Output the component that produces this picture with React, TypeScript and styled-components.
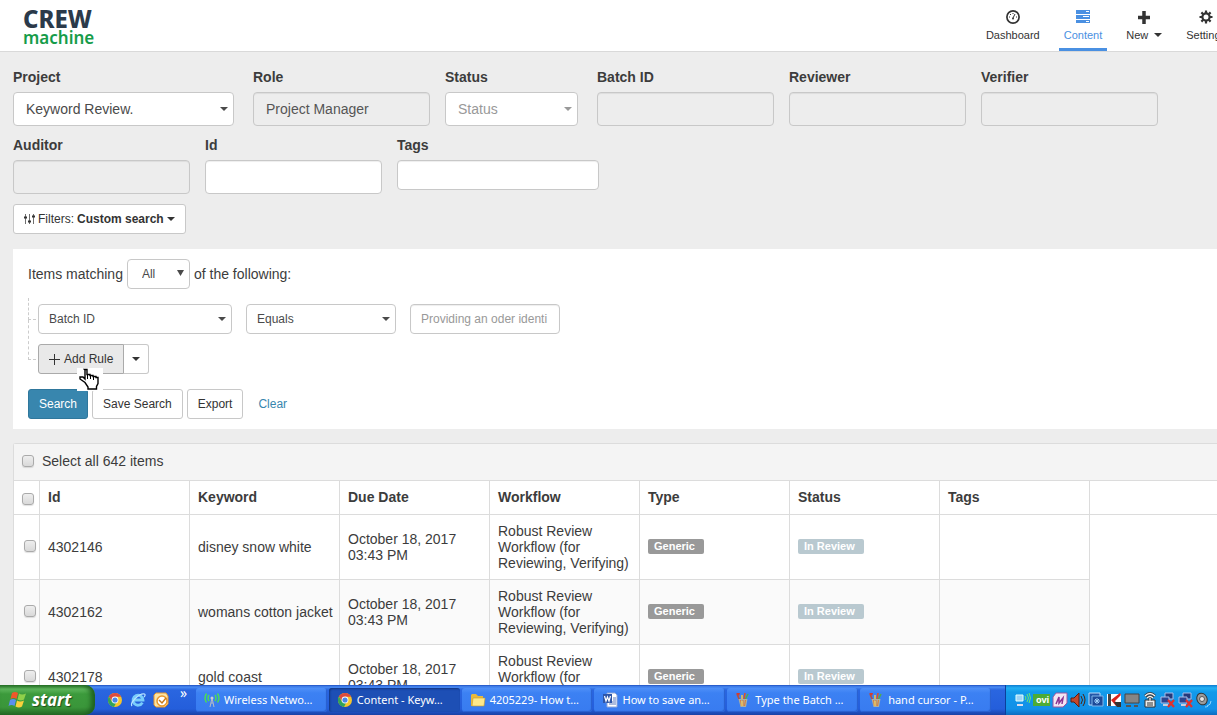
import React from "react";
import styled, { createGlobalStyle, css } from "styled-components";

const Global = createGlobalStyle`
  *, *::before, *::after { box-sizing: border-box; }
  body { margin: 0; background: #ededed; color: #3c3c3c; font: 14px/16px "Liberation Sans", Arial, sans-serif; }
  button, input, select { font: inherit; color: inherit; margin: 0; }
`;

const Desktop = styled.div`
  display: flex;
  flex-direction: column;
  height: 100vh;
  overflow: hidden;
`;
const Page = styled.div`
  flex: 1;
  min-height: 0;
  overflow: hidden;
`;

/* Header */
const Header = styled.header`
  display: flex;
  justify-content: space-between;
  height: 52px;
  background: #fff;
  border-bottom: 1px solid #d9d9d9;
  overflow: hidden;
`;
const Logo = styled.a`
  display: flex;
  flex-direction: column;
  padding: 8px 0 0 23px;
  text-decoration: none;
  font-family: "Noto Sans", sans-serif;
`;
const LogoTop = styled.span`
  color: #2b3a4a;
  font-size: 24px;
  line-height: 22px;
  font-weight: 800;
`;
const LogoBottom = styled.span`
  color: #169c4a;
  font-size: 17px;
  line-height: 16px;
  font-weight: 600;
`;
const Nav = styled.nav`
  display: flex;
  gap: 14px;
  margin-right: -14px;
`;
const NavItem = styled.a<{ $active?: boolean }>`
  display: flex;
  flex-direction: column;
  align-items: center;
  gap: 2px;
  padding: 9px 5px 0;
  border-bottom: 3px solid ${(p) => (p.$active ? "#4a90e2" : "transparent")};
  color: ${(p) => (p.$active ? "#4a90e2" : "#333")};
  font-size: 11px;
  text-decoration: none;
  white-space: nowrap;
`;
const NavText = styled.span`
  display: flex;
  align-items: center;
  gap: 6px;
`;

/* Search fields */
const Fields = styled.form`
  display: flex;
  flex-wrap: wrap;
  align-items: flex-start;
  row-gap: 11px;
  padding: 17px 0 10px 13px;
`;
const Field = styled.div<{ $w: number; $gap?: number }>`
  width: ${(p) => p.$w}px;
  margin-right: ${(p) => p.$gap ?? 15}px;
`;
const Label = styled.label`
  display: block;
  margin-bottom: 7px;
  font-weight: 700;
`;
const box = css`
  background: #fff;
  border: 1px solid #c8c8c8;
  border-radius: 4px;
`;
const TextBox = styled.input<{ $h?: number; $small?: boolean }>`
  ${box}
  display: block;
  width: 100%;
  height: ${(p) => p.$h ?? 34}px;
  padding: 0 ${(p) => (p.$small ? 10 : 12)}px;
  font-size: ${(p) => (p.$small ? 12 : 14)}px;
  box-shadow: inset 0 1px 1px rgba(0, 0, 0, 0.07);
  &:disabled { background: #ededed; color: #555; opacity: 1; }
  &::placeholder { color: #999; opacity: 1; }
`;
const SelectWrap = styled.div<{ $w?: number; $muted?: boolean }>`
  position: relative;
  flex: none;
  width: ${(p) => (p.$w ? `${p.$w}px` : "100%")};
  color: ${(p) => (p.$muted ? "#999" : "#4a4a4a")};
  > svg { position: absolute; right: 6px; top: 50%; margin-top: -2px; pointer-events: none; }
`;
const Select = styled.select<{ $small?: boolean }>`
  ${box}
  display: block;
  appearance: none;
  width: 100%;
  height: ${(p) => (p.$small ? 30 : 34)}px;
  padding: 0 ${(p) => (p.$small ? 10 : 12)}px;
  font-size: ${(p) => (p.$small ? 12 : 14)}px;
`;
const AllSelect = styled(SelectWrap)`
  select { padding-left: 14px; }
  > svg { margin-top: -4px; }
`;

const Button = styled.button<{ $tone?: "primary" | "link" | "pressed" }>`
  display: inline-flex;
  align-items: center;
  justify-content: center;
  gap: 3px;
  height: 30px;
  padding: 0 10px;
  border: 1px solid #c8c8c8;
  border-radius: 3px;
  background: #fff;
  color: #333;
  font-size: 12px;
  white-space: nowrap;
  ${(p) => p.$tone === "primary" && css`background: #3886ae; border-color: #2f779c; color: #fff;`}
  ${(p) => p.$tone === "link" && css`background: none; border-color: transparent; color: #3886ae;`}
  ${(p) => p.$tone === "pressed" && css`background: #e9e9e9; border-color: #aaa; border-radius: 3px 0 0 3px;`}
`;
const FilterBar = styled.div`
  padding-left: 13px;
`;

/* Rule builder */
const RulePanel = styled.section`
  margin: 15px 0 14px 13px;
  padding: 10px 15px;
  background: #fff;
`;
const Line = styled.div`
  display: flex;
  align-items: center;
  gap: 4px;
`;
const Rules = styled.div`
  display: flex;
  flex-direction: column;
  gap: 10px;
  margin: 15px 0;
  padding-left: 10px;
`;
const Rule = styled.div<{ $reach: number; $gap?: number }>`
  position: relative;
  display: flex;
  gap: ${(p) => p.$gap ?? 14}px;
  &::before {
    content: "";
    position: absolute;
    left: -10px;
    bottom: 14px;
    width: 8px;
    height: ${(p) => p.$reach}px;
    border: dashed #ccc;
    border-width: 0 0 1px 1px;
  }
`;
const RuleValue = styled.div`
  width: 150px;
`;
const CaretButton = styled(Button)`
  width: 26px;
  margin-left: -1px;
  padding: 0;
  border-left-color: #aaa;
  border-radius: 0 3px 3px 0;
`;
const Hand = styled.svg`
  position: absolute;
  left: 39px;
  top: 24px;
  z-index: 1;
`;

/* Results */
const Results = styled.section`
  margin-left: 13px;
  background: #fff;
  border: solid #dcdcdc;
  border-width: 1px 0 0 1px;
  border-radius: 3px 0 0 0;
`;
const SelectAll = styled.label`
  display: flex;
  align-items: center;
  gap: 8px;
  height: 37px;
  padding: 0 0 2px 8px;
  background: #f4f4f4;
  border-bottom: 1px solid #dcdcdc;
`;
const Check = styled.input.attrs({ type: "checkbox" })`
  appearance: none;
  display: block;
  width: 12px;
  height: 12px;
  border: 1px solid #aaa;
  border-radius: 3px;
  background: linear-gradient(#eee, #d9d9d9);
  box-shadow: 0 1px 1px rgba(0, 0, 0, 0.12);
`;
const Table = styled.table`
  table-layout: fixed;
  width: 100%;
  border-collapse: separate;
  border-spacing: 0;
`;
const Th = styled.th`
  height: 34px;
  padding: 0 8px 2px;
  border: solid #dcdcdc;
  border-width: 0 1px 1px 0;
  text-align: left;
  &:first-child { padding: 2px 0 0 8px; }
  &:last-child { border-right: 0; }
`;
const Col = styled.col<{ $w?: number }>`
  width: ${(p) => (p.$w ? `${p.$w}px` : "auto")};
`;
const Td = styled.td`
  padding: 8px;
  border: solid #dcdcdc;
  border-width: 0 1px 1px 0;
  tr:nth-child(even) > & { background: #fafafa; }
  &:first-child { padding: 0 0 2px 10px; }
  tr > &:last-child { border: 0; background: #fff; }
`;
const NoWrapTd = styled(Td)`
  white-space: nowrap;
`;
const Badge = styled.span<{ $color: string }>`
  display: block;
  width: fit-content;
  margin-bottom: 2px;
  padding: 0 9px 0 6px;
  border-radius: 2px;
  background: ${(p) => p.$color};
  color: #fff;
  font-size: 11px;
  font-weight: 700;
  line-height: 15px;
`;

/* Taskbar */
const Taskbar = styled.footer`
  display: flex;
  flex: none;
  height: 30px;
  background: linear-gradient(#1e4fc0 0, #4a8cf4 2px, #2a66e0 5px, #245edb 24px, #1941a5 30px);
  color: #fff;
  font-family: "Noto Sans", sans-serif;
  font-size: 11px;
`;
const Start = styled.button`
  display: flex;
  align-items: center;
  gap: 5px;
  width: 95px;
  padding: 0 0 0 8px;
  border: 0;
  border-radius: 0 10px 10px 0;
  background: linear-gradient(#2c7a2c, #5eb65c 4px, #3c9a3c 9px, #3a963a 22px, #276c27);
  box-shadow: inset -4px 0 5px #1f611f;
  color: #fff;
  font: italic 700 17px/20px "Open Sans", sans-serif;
  text-shadow: 1px 1px 1px #1c4d1c;
`;
const Quick = styled.div`
  display: flex;
  align-items: center;
  gap: 7px;
  width: 101px;
  padding-left: 12px;
`;
const More = styled.span`
  align-self: flex-start;
  margin-left: 4px;
  font-size: 14px;
`;
const Tasks = styled.div`
  display: flex;
  flex: 1;
  gap: 2px;
  padding: 3px 14px 3px 0;
`;
const Task = styled.button<{ $active?: boolean }>`
  display: flex;
  flex: 1;
  align-items: center;
  gap: 4px;
  min-width: 0;
  padding: 0 8px;
  border: 0;
  border-radius: 3px;
  background: ${(p) => (p.$active ? "#1d4fb5" : "linear-gradient(#4f90f8, #3c81f3 5px, #387bf0)")};
  box-shadow: ${(p) => (p.$active ? "inset 1px 1px 2px #123680" : "inset -1px -1px 1px #285fce")};
  white-space: nowrap;
  > svg { flex: none; }
`;
const Tray = styled.div`
  display: flex;
  align-items: center;
  gap: 2px;
  width: 212px;
  padding-left: 9px;
  border-left: 1px solid #0c3f9b;
  background: linear-gradient(#0e7bd0, #22b0f4 3px, #129aea 7px, #1290e8 24px, #0d6cc0);
  > svg { flex: none; }
`;

const Caret = () => (
  <svg width="8" height="4" viewBox="0 0 8 4" fill="currentColor" aria-hidden="true">
    <path d="M0 0h8L4 4z" />
  </svg>
);

const I = ({ children }: { children: React.ReactNode }) => (
  <svg width="16" height="16" viewBox="0 0 16 16" aria-hidden="true">{children}</svg>
);

const Chrome = () => (
  <I>
    <circle cx="8" cy="8" r="7" fill="#f6c52c" />
    <path d="M1.9 4.5A7 7 0 0 1 14.2 4.8H8L5 9z" fill="#dd4b3e" />
    <path d="M1.9 4.5 5 9.8l4 1.2-2 4A7 7 0 0 1 1.9 4.5z" fill="#31a35a" />
    <circle cx="8" cy="8" r="3.4" fill="#fff" />
    <circle cx="8" cy="8" r="2.6" fill="#4a86e8" />
  </I>
);
const Explorer = () => (
  <I>
    <path d="M12.4 10.6A5 5 0 1 1 13 8H4" fill="none" stroke="#79cdfb" strokeWidth="2.8" />
    <path d="M2 14C-.5 11 9 1 14.5 2c1 .5.5 2-.5 3" fill="none" stroke="#b9e4ff" strokeWidth="1.2" />
  </I>
);
const Outlook = () => (
  <I>
    <path d="M3 1h10l2 3v8l-3 3H3l-2-2V3z" fill="#fbe3a4" stroke="#e8952a" />
    <circle cx="9" cy="9" r="5" fill="#fff" stroke="#e8952a" strokeWidth="1.5" />
    <path d="M6 8l3 3 4-5" fill="none" stroke="#c77a1c" strokeWidth="1.5" />
  </I>
);
const Wireless = () => (
  <I>
    <path d="M8 6l-2 9M8 6l2 9M7 11h2" stroke="#b8bcc4" fill="none" />
    <circle cx="8" cy="6" r="1.5" fill="#ccc" />
    <path d="M5 3q-2 3 0 6M2.5 1.5q-3 4.500 0 9M11 3q2 3 0 6M13.5 1.5q3 4.500 0 9" stroke="#4ee04e" fill="none" strokeWidth="1.4" />
  </I>
);
const Folder = () => (
  <I>
    <path d="M1 3l1-1h4l2 2h5v10H1z" fill="#e8b93c" />
    <path d="M3 6h12l-1 8H2z" fill="#fde88b" stroke="#c99a26" strokeWidth=".6" />
  </I>
);
const Word = () => (
  <I>
    <path d="M5 1h8l2 2v12H5z" fill="#fff" stroke="#8fa6d8" />
    <path d="M11 6h3M11 8h3M7 12h7M7 10h7" stroke="#5a79bd" />
    <path d="M1 2h9v9H1z" fill="#2d55a8" />
    <path d="M2.5 4L4 9l1.500-4L7 9l1.500-5" fill="none" stroke="#fff" strokeWidth="1.2" />
  </I>
);
const Paint = () => (
  <I>
    <path d="M5 9L2 2" stroke="#b7503c" strokeWidth="1.6" />
    <path d="M1 1h4L4 4z" fill="#d9382c" />
    <path d="M7 8V3" stroke="#f0c94a" strokeWidth="1.6" />
    <path d="M9 8l1-7" stroke="#e0502c" strokeWidth="1.6" />
    <path d="M10 8l3-6" stroke="#4fae4c" strokeWidth="1.6" />
    <path d="M3.500 7h9l-1.500 8H5.500z" fill="#a9b0a6" />
    <path d="M5.500 8l1 6M8 8v6M10.500 8l-1 6" stroke="#d8803c" strokeWidth="1.2" />
    <path d="M7 9v5" stroke="#f4e26a" />
  </I>
);
const Flag = () => (
  <svg width="19" height="18" viewBox="0 0 19 18" aria-hidden="true">
    <path d="M4 2q3-2 6 0L8.500 8Q5.500 6 2.500 8z" fill="#f0582a" />
    <path d="M11 2.500q3 2 7 0L16 8.500q-3 2-6.500 0z" fill="#8fd04a" />
    <path d="M2 9q3-2 6 0l-1.500 6q-3-2-6 0z" fill="#5b8ff0" />
    <path d="M9 9.500q3 2 7 0L14 15.500q-3 2-6.500 0z" fill="#fbd13c" />
  </svg>
);
const Offline = () => (
  <I>
    <path d="M5 1h8v6H5z" fill="#24397a" stroke="#a8bde8" />
    <path d="M1 5h8v6H1z" fill="#2b4590" stroke="#a8bde8" />
    <path d="M3 13h5" stroke="#ccd" strokeWidth="2" />
    <path d="M8 8l6 7M14 8l-6 7" stroke="#e5302a" strokeWidth="2.2" />
  </I>
);
const Gear = () => (
  <I>
    <circle cx="8" cy="8" r="3.6" fill="none" stroke="currentColor" strokeWidth="2.2" />
    <path d="M8 1.500v2.500M8 12v2.500M1.500 8H4M12 8h2.500M3.400 3.400l1.800 1.800M10.800 10.800l1.800 1.800M3.400 12.600l1.800-1.800M10.800 5.200l1.800-1.800" stroke="currentColor" strokeWidth="2.2" />
  </I>
);

const rows = [
  { id: "4302146", keyword: "disney snow white" },
  { id: "4302162", keyword: "womans cotton jacket" },
  { id: "4302178", keyword: "gold coast" },
];
const columns = ["Id", "Keyword", "Due Date", "Workflow", "Type", "Status", "Tags"];

export default function App() {
  return (
    <>
      <Global />
      <Desktop>
        <Page>
          <Header>
            <Logo href="#">
              <LogoTop>CREW</LogoTop>
              <LogoBottom>machine</LogoBottom>
            </Logo>
            <Nav>
              <NavItem href="#">
                <I>
                  <circle cx="8" cy="8" r="6.1" fill="none" stroke="currentColor" strokeWidth="1.7" />
                  <path d="M8 9l2-4" stroke="currentColor" />
                  <circle cx="8" cy="9.5" r="1" fill="currentColor" />
                  <path d="M4 8h1M11 8h1M5 5l1 1M8 4v1" stroke="currentColor" />
                </I>
                Dashboard
              </NavItem>
              <NavItem href="#" $active>
                <I>
                  <path d="M1 1h14v4H1zM1 6h14v4H1zM1 11h14v3H1z" fill="currentColor" />
                  <path d="M11 2.500h3M8 7.500h6M11 12.500h3" stroke="#fff" />
                </I>
                Content
              </NavItem>
              <NavItem href="#">
                <I><path d="M8 2v13M2 8.500h12" stroke="currentColor" strokeWidth="3.5" /></I>
                <NavText>New <Caret /></NavText>
              </NavItem>
              <NavItem href="#">
                <Gear />
                Settings
              </NavItem>
            </Nav>
          </Header>

          <Fields>
            <Field $w={221} $gap={19}>
              <Label htmlFor="project">Project</Label>
              <SelectWrap>
                <Select id="project"><option>Keyword Review.</option></Select>
                <Caret />
              </SelectWrap>
            </Field>
            <Field $w={177}>
              <Label htmlFor="role">Role</Label>
              <TextBox id="role" defaultValue="Project Manager" disabled />
            </Field>
            <Field $w={133} $gap={19}>
              <Label htmlFor="status">Status</Label>
              <SelectWrap $muted>
                <Select id="status"><option>Status</option></Select>
                <Caret />
              </SelectWrap>
            </Field>
            {["Batch ID", "Reviewer", "Verifier", "Auditor"].map((name) => (
              <Field $w={177} key={name}>
                <Label htmlFor={name}>{name}</Label>
                <TextBox id={name} disabled />
              </Field>
            ))}
            <Field $w={177}>
              <Label htmlFor="id">Id</Label>
              <TextBox id="id" />
            </Field>
            <Field $w={202}>
              <Label htmlFor="tags">Tags</Label>
              <TextBox id="tags" $h={30} />
            </Field>
          </Fields>

          <FilterBar>
            <Button>
              <svg width="11" height="12" viewBox="0 0 11 12" stroke="currentColor" aria-hidden="true">
                <path d="M1.500 1v10M5.500 1v10M9.500 1v10" strokeOpacity=".7" />
                <path d="M0 4.500h3M4 8.500h3M8 3.500h3" strokeWidth="2" />
              </svg>
              Filters: <b>Custom search</b> <Caret />
            </Button>
          </FilterBar>

          <RulePanel>
            <Line>
              <label htmlFor="match">Items matching</label>
              <AllSelect $w={63}>
                <Select id="match" $small><option>All</option></Select>
                <svg width="7" height="7" viewBox="0 0 7 7" fill="currentColor" aria-hidden="true"><path d="M0 0h7L3.500 6z" /></svg>
              </AllSelect>
              of the following:
            </Line>
            <Rules>
              <Rule $reach={22}>
                <SelectWrap $w={194}>
                  <Select $small aria-label="Rule field"><option>Batch ID</option></Select>
                  <Caret />
                </SelectWrap>
                <SelectWrap $w={150}>
                  <Select $small aria-label="Rule operator"><option>Equals</option></Select>
                  <Caret />
                </SelectWrap>
                <RuleValue>
                  <TextBox $h={30} $small aria-label="Rule value" placeholder="Providing an oder identi" />
                </RuleValue>
              </Rule>
              <Rule $reach={40} $gap={0}>
                <Button $tone="pressed">
                  <svg width="12" height="12" viewBox="0 0 12 12" stroke="currentColor" aria-hidden="true"><path d="M5.500 1v11M0 6.500h11" /></svg>
                  Add Rule
                </Button>
                <CaretButton aria-label="More rule types"><Caret /></CaretButton>
                <Hand width="26" height="24" viewBox="0 0 26 24" aria-hidden="true">
                  <path d="M0 0h26v23H0z" fill="#fff" />
                  <path
                    d="M7.500 1.500h2.500v5h3v1h3v1h3v1h2v6l-1.500 3v2.500H11v-2l-3-4.500-5-3.500v-2h3l2 2v-9z"
                    fill="#fff"
                    stroke="#000"
                    strokeWidth="1.4"
                  />
                  <path d="M10.500 6v5M13.500 8v3M16.500 9v3" stroke="#000" />
                </Hand>
              </Rule>
            </Rules>
            <Line>
              <Button $tone="primary">Search</Button>
              <Button>Save Search</Button>
              <Button>Export</Button>
              <Button $tone="link">Clear</Button>
            </Line>
          </RulePanel>

          <Results>
            <SelectAll><Check />Select all 642 items</SelectAll>
            <Table>
              <colgroup>
                <Col $w={26} />
                {columns.map((c) => <Col $w={150} key={c} />)}
                <Col />
              </colgroup>
              <thead>
                <tr>
                  <Th><Check aria-label="Select page" /></Th>
                  {columns.map((c) => <Th key={c}>{c}</Th>)}
                  <Th />
                </tr>
              </thead>
              <tbody>
                {rows.map((r) => (
                  <tr key={r.id}>
                    <Td><Check aria-label={`Select ${r.id}`} /></Td>
                    <Td>{r.id}</Td>
                    <NoWrapTd>{r.keyword}</NoWrapTd>
                    <Td>October 18, 2017 03:43 PM</Td>
                    <Td>Robust Review Workflow (for Reviewing, Verifying)</Td>
                    <Td><Badge $color="#999">Generic</Badge></Td>
                    <Td><Badge $color="#b9c9d0">In Review</Badge></Td>
                    <Td />
                    <Td />
                  </tr>
                ))}
              </tbody>
            </Table>
          </Results>
        </Page>

        <Taskbar>
          <Start><Flag />start</Start>
          <Quick><Chrome /><Explorer /><Outlook /><More>»</More></Quick>
          <Tasks>
            <Task><Wireless />Wireless Netwo…</Task>
            <Task $active><Chrome />Content - Keyw…</Task>
            <Task><Folder />4205229- How t…</Task>
            <Task><Word />How to save an…</Task>
            <Task><Paint />Type the Batch …</Task>
            <Task><Paint />hand cursor - P…</Task>
          </Tasks>
          <Tray>
            <I>
              <path d="M1 3h7v6H1z" fill="#9fd3f5" stroke="#dff" />
              <path d="M2 12h6v2H2z" fill="#dde" />
              <path d="M10 4q2 2 0 4M12 2q3 4 0 8M14 1q3 5 0 10" fill="none" stroke="#6bea6b" />
            </I>
            <svg width="17" height="12" viewBox="0 0 17 12" aria-hidden="true">
              <path d="M0 0h17v12H0z" fill="#4cab35" />
              <text x="3" y="9" fill="#fff" fontSize="9" fontWeight="700">ovi</text>
            </svg>
            <I>
              <path d="M4 1h11v10l-4 4H1V5z" fill="#f3e5f3" stroke="#9b57a0" />
              <path d="M4 12l3-7 0 6 4-5-1 6" fill="none" stroke="#8a3290" strokeWidth="1.5" />
            </I>
            <I>
              <path d="M1 6h3l5-5v14l-5-5H1z" fill="#c4482c" stroke="#5c1c10" />
              <path d="M11 4q3 4 0 8M13 2q4 6 0 12" fill="none" stroke="#4d2412" />
            </I>
            <I>
              <path d="M1 1h11v12H1z" fill="#2458a8" stroke="#bcdcfa" />
              <path d="M4 4h11v10H4z" fill="#1d4a98" stroke="#7fb4ea" />
              <path d="M9 6v6M6 9h6M7 7l4 4M11 7l-4 4" stroke="#9fd0fa" />
            </I>
            <I>
              <path d="M1 2h14v12H1z" fill="#fff" />
              <path d="M2 2h3v12H2z" fill="#444" />
              <path d="M5 8l9-7 1 2-6 6 3 4-2 1z" fill="#d9221c" />
              <path d="M8 10h7v5h-4z" fill="#333" />
            </I>
            <I>
              <path d="M1 2h14v9H1z" fill="#858585" stroke="#444" />
              <path d="M2 13h5v2H2zM10 13h4v2h-4z" fill="#555" />
            </I>
            <I>
              <path d="M3 8h10v7H3z" fill="#eee" stroke="#333" />
              <path d="M3 4q5-5 10 0M5 6q3-3 6 0M8 6v3" fill="none" stroke="#333" strokeWidth="2.6" />
              <path d="M3 4q5-5 10 0M5 6q3-3 6 0M8 6v3" fill="none" stroke="#f4f4f4" strokeWidth="1.3" />
              <path d="M5 11h6M5 13h6" stroke="#333" />
            </I>
            <Offline />
            <Offline />
            <I>
              <ellipse cx="6" cy="7" rx="5" ry="6" fill="#9a9a9a" stroke="#333" transform="rotate(-25 6 7)" />
              <circle cx="6" cy="7" r="2.5" fill="#e8e8e8" stroke="#555" />
              <path d="M11 14q4-1 4-5M9 15q2 0 3-1" fill="none" stroke="#8fd6ff" />
            </I>
          </Tray>
        </Taskbar>
      </Desktop>
    </>
  );
}
